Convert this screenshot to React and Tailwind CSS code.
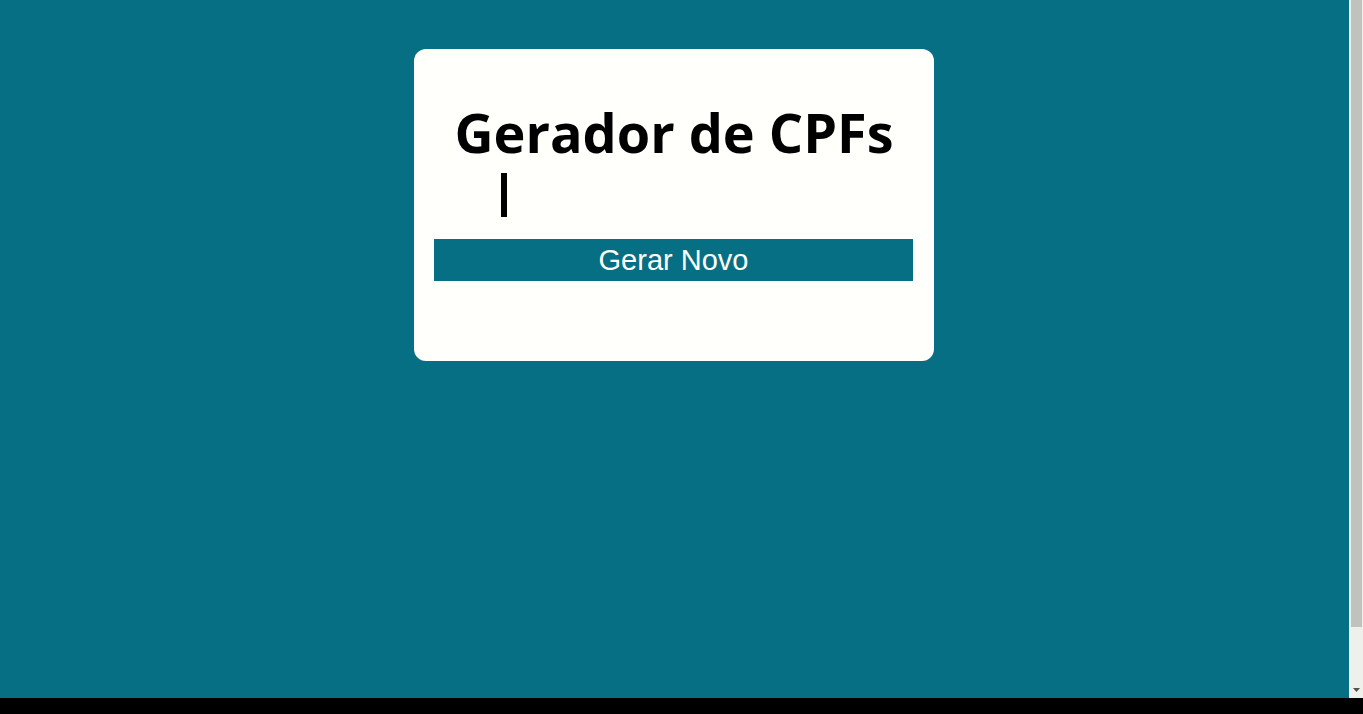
import React from 'react';

const GeradorCpf = () => {
  return (
    <div className="w-full h-[714px] flex flex-col bg-black overflow-hidden">
      <div className="h-[698px] flex">
        {/* Page */}
        <div className="flex-1 bg-[#066f83] flex justify-center items-start pt-[49px] pr-px">
          <div className="w-[520px] h-[312px] bg-[#fffffb] rounded-[12px] px-[20px] flex flex-col">
            <h1
              className="mt-[44px] text-center text-[54px] leading-[79px] font-bold text-black"
              style={{ fontFamily: '"Open Sans", sans-serif' }}
            >
              Gerador de CPFs
            </h1>
            <div className="mt-[1px] ml-[67px] w-[6px] h-[44px] bg-black"></div>
            <button
              className="mt-[22px] h-[42px] w-[479px] bg-[#066f83] text-[#fffffb] text-[29px] leading-[42px]"
              style={{ fontFamily: '"Liberation Sans", Arial, sans-serif' }}
            >
              Gerar Novo
            </button>
          </div>
        </div>

        {/* Scrollbar */}
        <div className="w-px bg-[#e8f4f4]"></div>
        <div className="w-[13px] bg-[#efefeb] flex flex-col items-center">
          <div className="w-[11px] h-[627px] bg-[#c2c2bd]"></div>
          <div className="flex-1"></div>
          <svg width="7" height="4" viewBox="0 0 7 4" className="mb-[6px]">
            <path d="M0 0 H7 L3.5 4 Z" fill="#505050" />
          </svg>
        </div>
      </div>
    </div>
  );
};

export default GeradorCpf;
